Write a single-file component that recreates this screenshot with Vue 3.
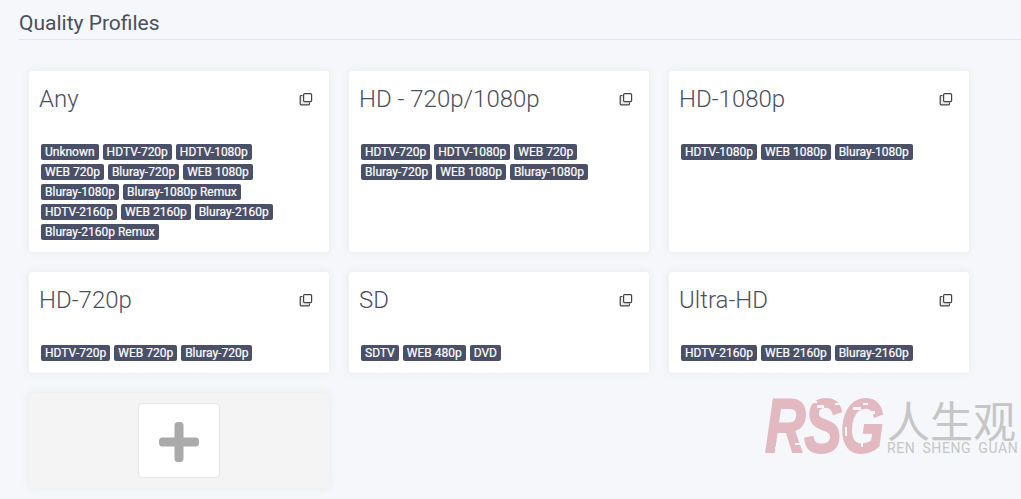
<script setup>
const profiles = [
  { name: 'Any', items: ['Unknown', 'HDTV-720p', 'HDTV-1080p', 'WEB 720p', 'Bluray-720p', 'WEB 1080p', 'Bluray-1080p', 'Bluray-1080p Remux', 'HDTV-2160p', 'WEB 2160p', 'Bluray-2160p', 'Bluray-2160p Remux'] },
  { name: 'HD - 720p/1080p', items: ['HDTV-720p', 'HDTV-1080p', 'WEB 720p', 'Bluray-720p', 'WEB 1080p', 'Bluray-1080p'] },
  { name: 'HD-1080p', items: ['HDTV-1080p', 'WEB 1080p', 'Bluray-1080p'] },
  { name: 'HD-720p', items: ['HDTV-720p', 'WEB 720p', 'Bluray-720p'] },
  { name: 'SD', items: ['SDTV', 'WEB 480p', 'DVD'] },
  { name: 'Ultra-HD', items: ['HDTV-2160p', 'WEB 2160p', 'Bluray-2160p'] },
]

// worn-off bits on the logo, in logo coordinates
const specks = [
  [52, 8, 7, 3], [60, 14, 5, 2], [48, 4, 4, 2], [70, 6, 6, 2], [88, 10, 8, 3],
  [98, 6, 5, 2], [106, 14, 4, 3], [80, 30, 2, 9], [96, 40, 2, 10], [30, 46, 6, 2], [10, 50, 5, 2],
]
</script>

<template>
  <div class="page">
    <div class="section-title">Quality Profiles</div>

    <div class="cards">
      <div v-for="p in profiles" :key="p.name" class="card">
        <div class="card-head">
          <div class="card-name">{{ p.name }}</div>
          <svg class="copy" width="14" height="14" viewBox="0 0 14 14">
            <path d="M3.5 3.5H2.2a1 1 0 0 0-1 1v7.3a1 1 0 0 0 1 1h7.3a1 1 0 0 0 1-1v-1.3" fill="#e8e8e8" stroke="#444" stroke-width="1.2" />
            <rect x="4.6" y="1.6" width="8" height="8" rx="1" fill="#fff" stroke="#444" stroke-width="1.2" />
          </svg>
        </div>
        <div class="labels">
          <span v-for="item in p.items" :key="item" class="label">{{ item }}</span>
        </div>
      </div>

      <div class="card card-add">
        <div class="add-btn">
          <svg width="40" height="40" viewBox="0 0 40 40">
            <rect x="15.5" y="0" width="9" height="40" rx="3.5" fill="#aaa" />
            <rect x="0" y="15.5" width="40" height="9" rx="3.5" fill="#aaa" />
          </svg>
        </div>
      </div>
    </div>

    <div class="watermark">
      <div class="wm-logo">
        <div class="wm-rsg">RSG</div>
        <svg class="wm-specks" width="118" height="58" viewBox="0 0 118 58">
          <rect
            v-for="(s, i) in specks"
            :key="i"
            :x="s[0]"
            :y="s[1]"
            :width="s[2]"
            :height="s[3]"
            fill="#f5f7fa"
          />
        </svg>
      </div>
      <div class="wm-side">
        <div class="wm-cn">人生观</div>
        <div class="wm-en">REN SHENG GUAN</div>
      </div>
    </div>
  </div>
</template>

<style>
html, body {
  margin: 0;
  background: #f5f7fa;
}
</style>

<style scoped>
.page {
  position: relative;
  height: 499px;
  overflow: hidden;
  background: #f5f7fa;
  font-family: Roboto, "Liberation Sans", sans-serif;
}

.section-title {
  margin-left: 19px;
  height: 39px;
  border-bottom: 1px solid #e3e6ed;
  font-size: 21px;
  line-height: 46px;
  color: #4a4f60;
}

.cards {
  display: flex;
  flex-wrap: wrap;
  gap: 20px;
  width: 960px;
  padding: 31px 0 0 29px;
}

.card {
  width: 300px;
  box-sizing: border-box;
  padding: 0 12px 12px;
  background: #fff;
  border-radius: 3px;
  box-shadow: 0 0 10px 1px rgba(0, 0, 0, 0.05);
}

.card-head {
  display: flex;
  justify-content: space-between;
  align-items: center;
  height: 73px;
  padding-bottom: 18px;
  box-sizing: border-box;
}

.card-name {
  margin-left: -2px;
  font-size: 24px;
  font-weight: 300;
  color: #4a4f60;
}

.copy {
  margin-right: 4px;
}

.labels {
  display: flex;
  flex-wrap: wrap;
  gap: 4px;
}

.label {
  height: 16px;
  padding: 0 4px;
  border-radius: 2px;
  background: #4b5069;
  color: #fff;
  font-size: 12px;
  font-weight: 400;
  line-height: 16px;
  white-space: nowrap;
  -webkit-text-stroke: 0.2px #fff;
}

.card-add {
  display: flex;
  justify-content: center;
  height: 95px;
  padding: 10px 0;
  background: #f4f4f4;
}

.add-btn {
  display: flex;
  align-items: center;
  justify-content: center;
  width: 82px;
  height: 75px;
  box-sizing: border-box;
  padding-top: 3px;
  background: #fff;
  border: 1px solid #e5e5e5;
  border-radius: 4px;
}

.watermark {
  position: absolute;
  left: 765px;
  top: 397px;
  display: flex;
  gap: 4px;
}

.wm-logo {
  position: relative;
  width: 118px;
  height: 58px;
}

.wm-rsg {
  font-family: "Liberation Sans", sans-serif;
  font-size: 76px;
  font-weight: 700;
  font-style: italic;
  line-height: 58px;
  letter-spacing: -2px;
  white-space: nowrap;
  color: #e3b9c1;
  -webkit-text-stroke: 2px #e3b9c1;
  transform: scaleX(0.74);
  transform-origin: left top;
}

.wm-specks {
  position: absolute;
  left: 0;
  top: 0;
}

.wm-side {
  width: 130px;
}

.wm-cn {
  font-family: "Noto Sans CJK SC", sans-serif;
  font-size: 43px;
  line-height: 44px;
  white-space: nowrap;
  color: #c6c6c6;
}

.wm-en {
  font-family: Roboto, sans-serif;
  font-size: 14px;
  line-height: 14px;
  letter-spacing: 0.6px;
  word-spacing: 3px;
  white-space: nowrap;
  color: #c6c6c6;
}
</style>
